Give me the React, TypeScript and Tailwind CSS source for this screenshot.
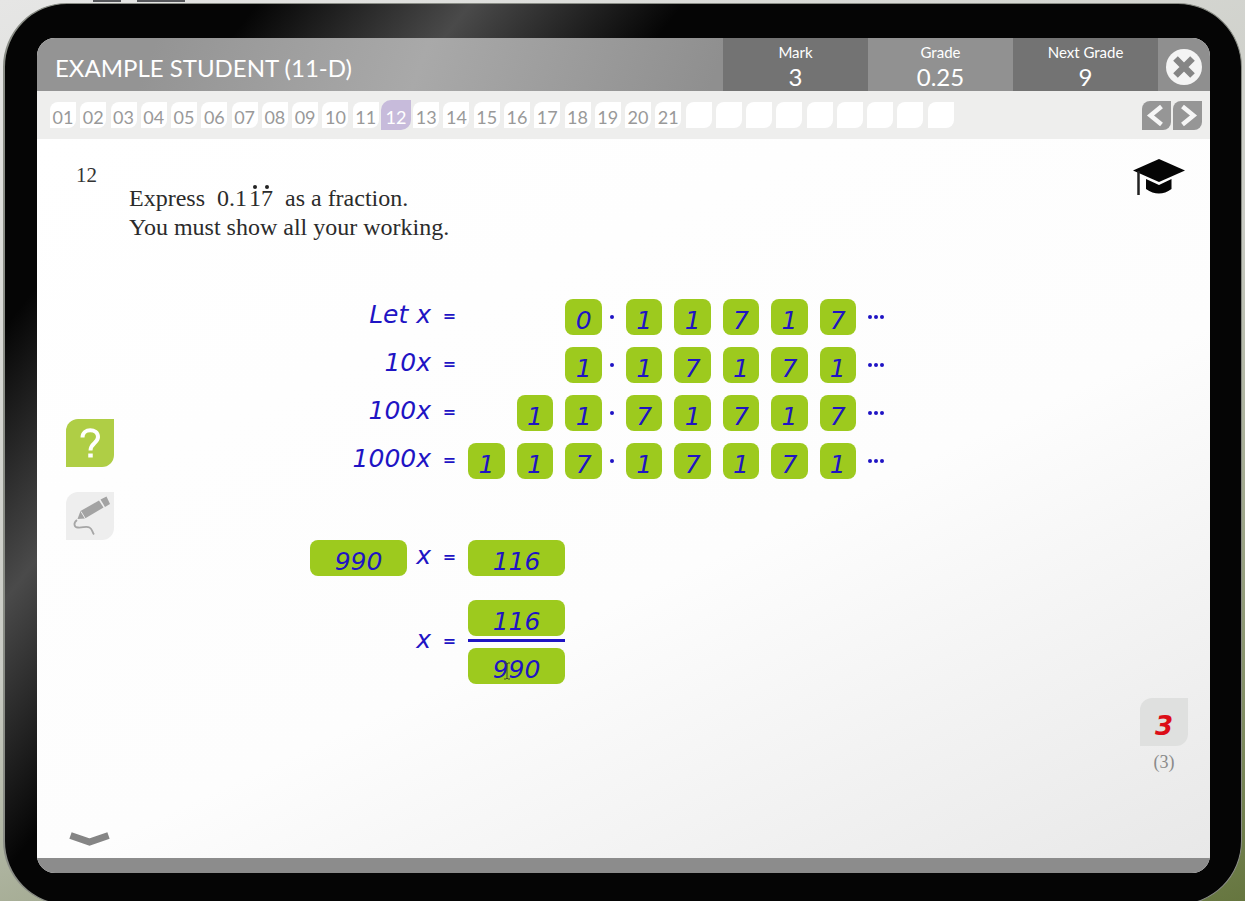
import { useState } from "react";

const questions = Array.from({ length: 21 }, (_, i) => String(i + 1).padStart(2, "0"));
const emptySlots = Array.from({ length: 9 }, (_, i) => i);

const stats = [
  { label: "Mark", value: "3", className: "bg-[#737373]" },
  { label: "Grade", value: "0.25", className: "bg-[#919191]" },
  { label: "Next Grade", value: "9", className: "bg-[#737373]" },
];

const rows = [
  { label: "Let x", whole: ["", "", "0"], decimals: ["1", "1", "7", "1", "7"] },
  { label: "10x", whole: ["", "", "1"], decimals: ["1", "7", "1", "7", "1"] },
  { label: "100x", whole: ["", "1", "1"], decimals: ["7", "1", "7", "1", "7"] },
  { label: "1000x", whole: ["1", "1", "7"], decimals: ["1", "7", "1", "7", "1"] },
];

const Answer = ({ value, label, className = "" }: { value: string; label: string; className?: string }) => (
  <input
    aria-label={label}
    defaultValue={value}
    className={`block h-9 min-w-0 rounded-lg bg-[#9dca1e] pt-2 text-center outline-none ${className}`}
  />
);

const Equals = () => <span className="w-[37px] pb-[2px] text-center text-[16px] font-bold not-italic">=</span>;

const App = () => {
  const [current, setCurrent] = useState("12");

  return (
    <div className="relative flex min-h-screen overflow-hidden bg-[linear-gradient(160deg,#e6e6e5_0%,#c9cbc4_50%,#66763f_100%)] px-[3px] pt-[3px] font-['Lato',sans-serif]">
      {/* volume buttons on the tablet's top edge */}
      <span className="absolute top-0 left-[93px] h-[2px] w-7 bg-[#55565a]" />
      <span className="absolute top-0 left-[137px] h-[2px] w-12 bg-[#55565a]" />

      <div className="-mb-1 flex flex-1 flex-col rounded-[64px] border border-l-2 border-[#8a8d86] bg-[linear-gradient(128deg,#050505_13%,#4a4a4a_24%,#050505_35%)] pt-[34px] pr-[31px] pb-[31px] pl-8">
        <div className="flex flex-1 flex-col overflow-hidden rounded-[18px] bg-white">
          <header className="flex h-[53px] items-stretch bg-[linear-gradient(110deg,#949494_10%,#a9a9a9_33%,#8f8f8f_58%)] text-white">
            <h1 className="flex-1 self-center pt-[6px] pl-[18px] text-[24px] leading-8">EXAMPLE STUDENT (11-D)</h1>
            {stats.map((stat) => (
              <div key={stat.label} className={`w-[145px] pt-1 text-center ${stat.className}`}>
                <p className="text-[15px] leading-5">{stat.label}</p>
                <p className="text-[24px] leading-[30px]">{stat.value}</p>
              </div>
            ))}
            <button aria-label="Close" className="flex w-[52px] items-center justify-center pt-1">
              <svg viewBox="0 0 36 36" className="size-9">
                <circle cx="18" cy="18" r="18" fill="#f4f4f4" />
                <path d="M9.500 9.500l17 17M26.500 9.500L9.500 26.500" stroke="#858585" strokeWidth="6.5" />
              </svg>
            </button>
          </header>

          <nav className="flex h-12 items-center justify-between bg-[#eeeeed] pr-2 pl-[13px]">
            <div className="flex w-[904px] justify-between">
              {questions.map((q) => (
                <button
                  key={q}
                  onClick={() => setCurrent(q)}
                  className={`h-[26px] w-[26px] rounded-tl-lg rounded-br-lg pt-1 text-[18px] leading-[22px] ${
                    q === current ? "bg-[#c7bbdb] text-white ring-2 ring-[#c7bbdb]" : "bg-white text-[#999999]"
                  }`}
                >
                  {q}
                </button>
              ))}
              {emptySlots.map((slot) => (
                <span key={slot} className="h-[26px] w-[26px] rounded-tl-lg rounded-br-lg bg-white" />
              ))}
            </div>
            <div className="flex gap-[2px]">
              <button aria-label="Previous" className="rounded-tl-lg rounded-br-lg bg-[#969696]">
                <svg viewBox="0 0 29 29" className="size-[29px]">
                  <path d="M19.500 5.500L8.500 14.500L19.500 23.500" fill="none" stroke="#f6f6f6" strokeWidth="4.5" />
                </svg>
              </button>
              <button aria-label="Next" className="rounded-tl-lg rounded-br-lg bg-[#969696]">
                <svg viewBox="0 0 29 29" className="size-[29px]">
                  <path d="M9.500 5.500L20.500 14.500L9.500 23.500" fill="none" stroke="#f6f6f6" strokeWidth="4.5" />
                </svg>
              </button>
            </div>
          </nav>

          <main className="flex flex-1 bg-[linear-gradient(155deg,#ffffff_0%,#fdfdfd_58%,#e8e8e8_100%)]">
            <aside className="flex w-[92px] flex-col pt-6 pb-3 pl-[29px]">
              <span className="pl-[10px] font-['Liberation_Serif',serif] text-[21px] leading-6 text-[#333333]">12</span>
              <button
                aria-label="Help"
                className="mt-[232px] flex size-12 items-center justify-center rounded-tl-xl rounded-br-xl bg-[#afce45]"
              >
                <svg viewBox="0 0 48 48" className="size-12" fill="none" stroke="#ffffff" strokeWidth="4">
                  <path d="M16.500 18.500C16.500 8.500 32 9 32 18C32 24 24.500 24 24.500 31.500" />
                  <path d="M24.500 34.500V38.500" strokeWidth="4.5" />
                </svg>
              </button>
              <button aria-label="Draw" className="mt-[25px] size-12 rounded-tl-xl rounded-br-xl bg-[#eeeeee]">
                <svg viewBox="0 0 48 48" className="size-12">
                  <path d="M11.500 27L14.500 19L33 8.500L37.500 15.500L19 26.500Z" fill="#a3a3a3" />
                  <path d="M34.500 7.500L40.500 4.500L44 12L39 15Z" fill="#a3a3a3" />
                  <path d="M15 19.500L19.500 27" stroke="#eeeeee" strokeWidth="1" />
                  <path
                    d="M11 28C7 31 8 35.500 12 35.500C17 36 20 33.500 23.500 35.500C26.500 37 26 40 28 42.500"
                    fill="none"
                    stroke="#a6a6a6"
                    strokeWidth="1.8"
                  />
                </svg>
              </button>
              <button aria-label="Show more" className="mt-auto w-12">
                <svg viewBox="0 0 48 14" className="h-[14px] w-12">
                  <path d="M4.500 3.500L23.500 10L42.500 3.500" fill="none" stroke="#858585" strokeWidth="7" />
                </svg>
              </button>
            </aside>

            <section className="flex-1 pt-[45px]">
              <div className="font-['Liberation_Serif',serif] text-[24px] leading-[29px] text-[#2b2b2b]">
                <p>
                  Express&nbsp; 0.1
                  <span className="relative ml-[2px]">
                    1
                    <span className="absolute top-0 left-1 size-1 rounded-full bg-[#222222]" />
                  </span>
                  <span className="relative">
                    7
                    <span className="absolute top-0 left-1 size-1 rounded-full bg-[#222222]" />
                  </span>
                  &nbsp; as a fraction.
                </p>
                <p>You must show all your working.</p>
              </div>

              <div className="mt-[57px] font-['DejaVu_Sans',sans-serif] text-[25px] leading-9 text-[#1f14c4] italic">
                <div className="flex flex-col gap-3">
                  {rows.map((row) => (
                    <div key={row.label} className="flex h-9 items-center">
                      <span className="w-[302px] pb-1 text-right">{row.label}</span>
                      <Equals />
                      <div className="grid w-[134px] grid-cols-3 gap-3">
                        {row.whole.map((digit, i) =>
                          digit ? (
                            <Answer key={i} value={digit} label={`${row.label} whole digit ${i + 1}`} />
                          ) : (
                            <span key={i} />
                          )
                        )}
                      </div>
                      <span className="flex w-6 pl-2">
                        <span className="size-1 rounded-full bg-[#1f14c4]" />
                      </span>
                      <div className="grid w-[230px] grid-cols-5 gap-3">
                        {row.decimals.map((digit, i) => (
                          <Answer key={i} value={digit} label={`${row.label} decimal digit ${i + 1}`} />
                        ))}
                      </div>
                      <span className="flex gap-[2px] pl-3">
                        <span className="size-1 rounded-full bg-[#1f14c4]" />
                        <span className="size-1 rounded-full bg-[#1f14c4]" />
                        <span className="size-1 rounded-full bg-[#1f14c4]" />
                      </span>
                    </div>
                  ))}
                </div>

                <div className="mt-[61px] flex h-9 items-center pl-[181px]">
                  <Answer value="990" label="Multiple of x" className="w-[97px]" />
                  <span className="w-6 pb-1 text-right">x</span>
                  <Equals />
                  <Answer value="116" label="Difference" className="w-[97px]" />
                </div>

                <div className="mt-6 flex items-center">
                  <span className="w-[302px] pb-1 text-right">x</span>
                  <Equals />
                  <div className="relative">
                    <Answer value="116" label="Numerator" className="w-[97px]" />
                    <div className="mt-[3px] mb-[6px] h-[3px] bg-[#1f14c4]" />
                    <Answer value="990" label="Denominator" className="w-[97px]" />
                    <svg viewBox="0 0 8 18" className="absolute right-[54px] bottom-1 h-[18px] w-2" fill="none" stroke="#3f4a2a">
                      <path d="M1 1H3L4 2L5 1H7M4 2V16M1 17H3L4 16L5 17H7" />
                    </svg>
                  </div>
                </div>
              </div>
            </section>

            <aside className="flex w-[70px] flex-col items-start pt-[17px] pb-[84px]">
              <button aria-label="Mark scheme" className="-ml-2">
                <svg viewBox="0 0 54 40" className="h-10 w-[54px]">
                  <path d="M1 14.500L27 3L53 14.500L27 26Z" fill="#050505" />
                  <path d="M14 23L27 29L39.500 23V33Q27 42 14 33Z" fill="#050505" />
                  <path d="M6.500 15V39" stroke="#222222" strokeWidth="2.5" />
                </svg>
              </button>
              <div className="mt-auto w-12 text-center">
                <p className="flex h-12 items-center justify-center rounded-tl-xl rounded-br-xl bg-[#dfe0df] pt-2 font-['DejaVu_Sans',sans-serif] text-[26px] font-bold text-[#dc0d17] italic">
                  3
                </p>
                <p className="pt-1 font-['Liberation_Serif',serif] text-[18px] leading-6 text-[#8a8a8a]">(3)</p>
              </div>
            </aside>
          </main>

          <footer className="h-[15px] bg-[#8c8c8c]" />
        </div>
      </div>
    </div>
  );
};

export default App;
